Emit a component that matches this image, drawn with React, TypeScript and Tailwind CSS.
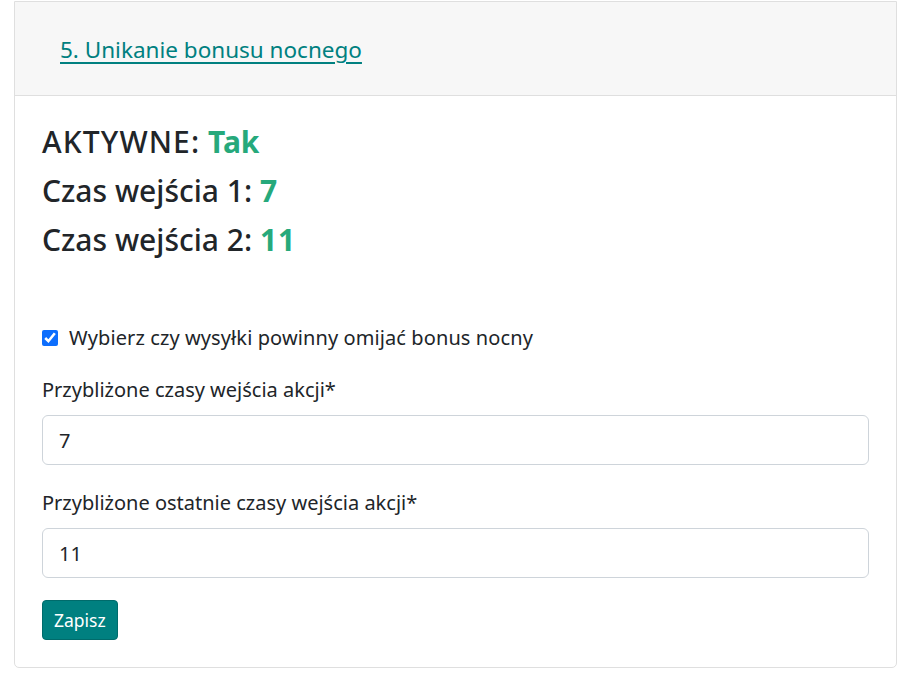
import React from "react";

export default function App() {
  return (
    <div className="min-h-[691px] bg-white pt-px pl-[14px] pr-[17px]" style={{ fontFamily: '"Noto Sans", "Open Sans", sans-serif' }}>
      <div className="rounded-b-[5px] border border-[#dfdfdf] text-[#212529]">
        <div className="flex h-[94px] items-center border-b border-[#dfdfdf] bg-[#f7f7f7] pl-[45px] pt-[3px]">
          <a href="#" className="text-[22.5px] text-[#008080] underline decoration-[2px] underline-offset-[4px]">
            5. Unikanie bonusu nocnego
          </a>
        </div>
        <div className="px-[27px] pb-[27px] pt-[29px]">
          <div className="flex flex-col gap-[15px] text-[30px] font-medium leading-[34px]">
            <div>
              <span className="tracking-[1.1px]">AKTYWNE:</span> <span className="font-bold text-[#26a97b]">Tak</span>
            </div>
            <div>
              Czas wejścia 1: <span className="font-bold text-[#26a97b]">7</span>
            </div>
            <div>
              Czas wejścia 2: <span className="font-bold tracking-[1px] text-[#26a97b]">11</span>
            </div>
          </div>
          <label className="mt-[67px] flex items-center gap-[11px] text-[20px] leading-[27px] tracking-[0.1px]">
            <input type="checkbox" defaultChecked className="h-[16px] w-[16px] accent-[#0d6efd]" />
            Wybierz czy wysyłki powinny omijać bonus nocny
          </label>
          <div className="mt-[25px] text-[20px] leading-[27px]">Przybliżone czasy wejścia akcji*</div>
          <input
            defaultValue="7"
            className="mt-[12px] h-[50px] w-full rounded-[6px] border border-[#ced4da] px-[16px] text-[20px] text-[#212529]"
          />
          <div className="mt-[24px] text-[20px] leading-[27px]">Przybliżone ostatnie czasy wejścia akcji*</div>
          <input
            defaultValue="11"
            className="mt-[12px] h-[50px] w-full rounded-[6px] border border-[#ced4da] px-[16px] text-[20px] text-[#212529]"
          />
          <button className="mt-[22px] block h-[40px] rounded-[4px] border border-[#006b6b] bg-[#008080] px-[11px] text-[17.5px] text-white">
            Zapisz
          </button>
        </div>
      </div>
    </div>
  );
}
